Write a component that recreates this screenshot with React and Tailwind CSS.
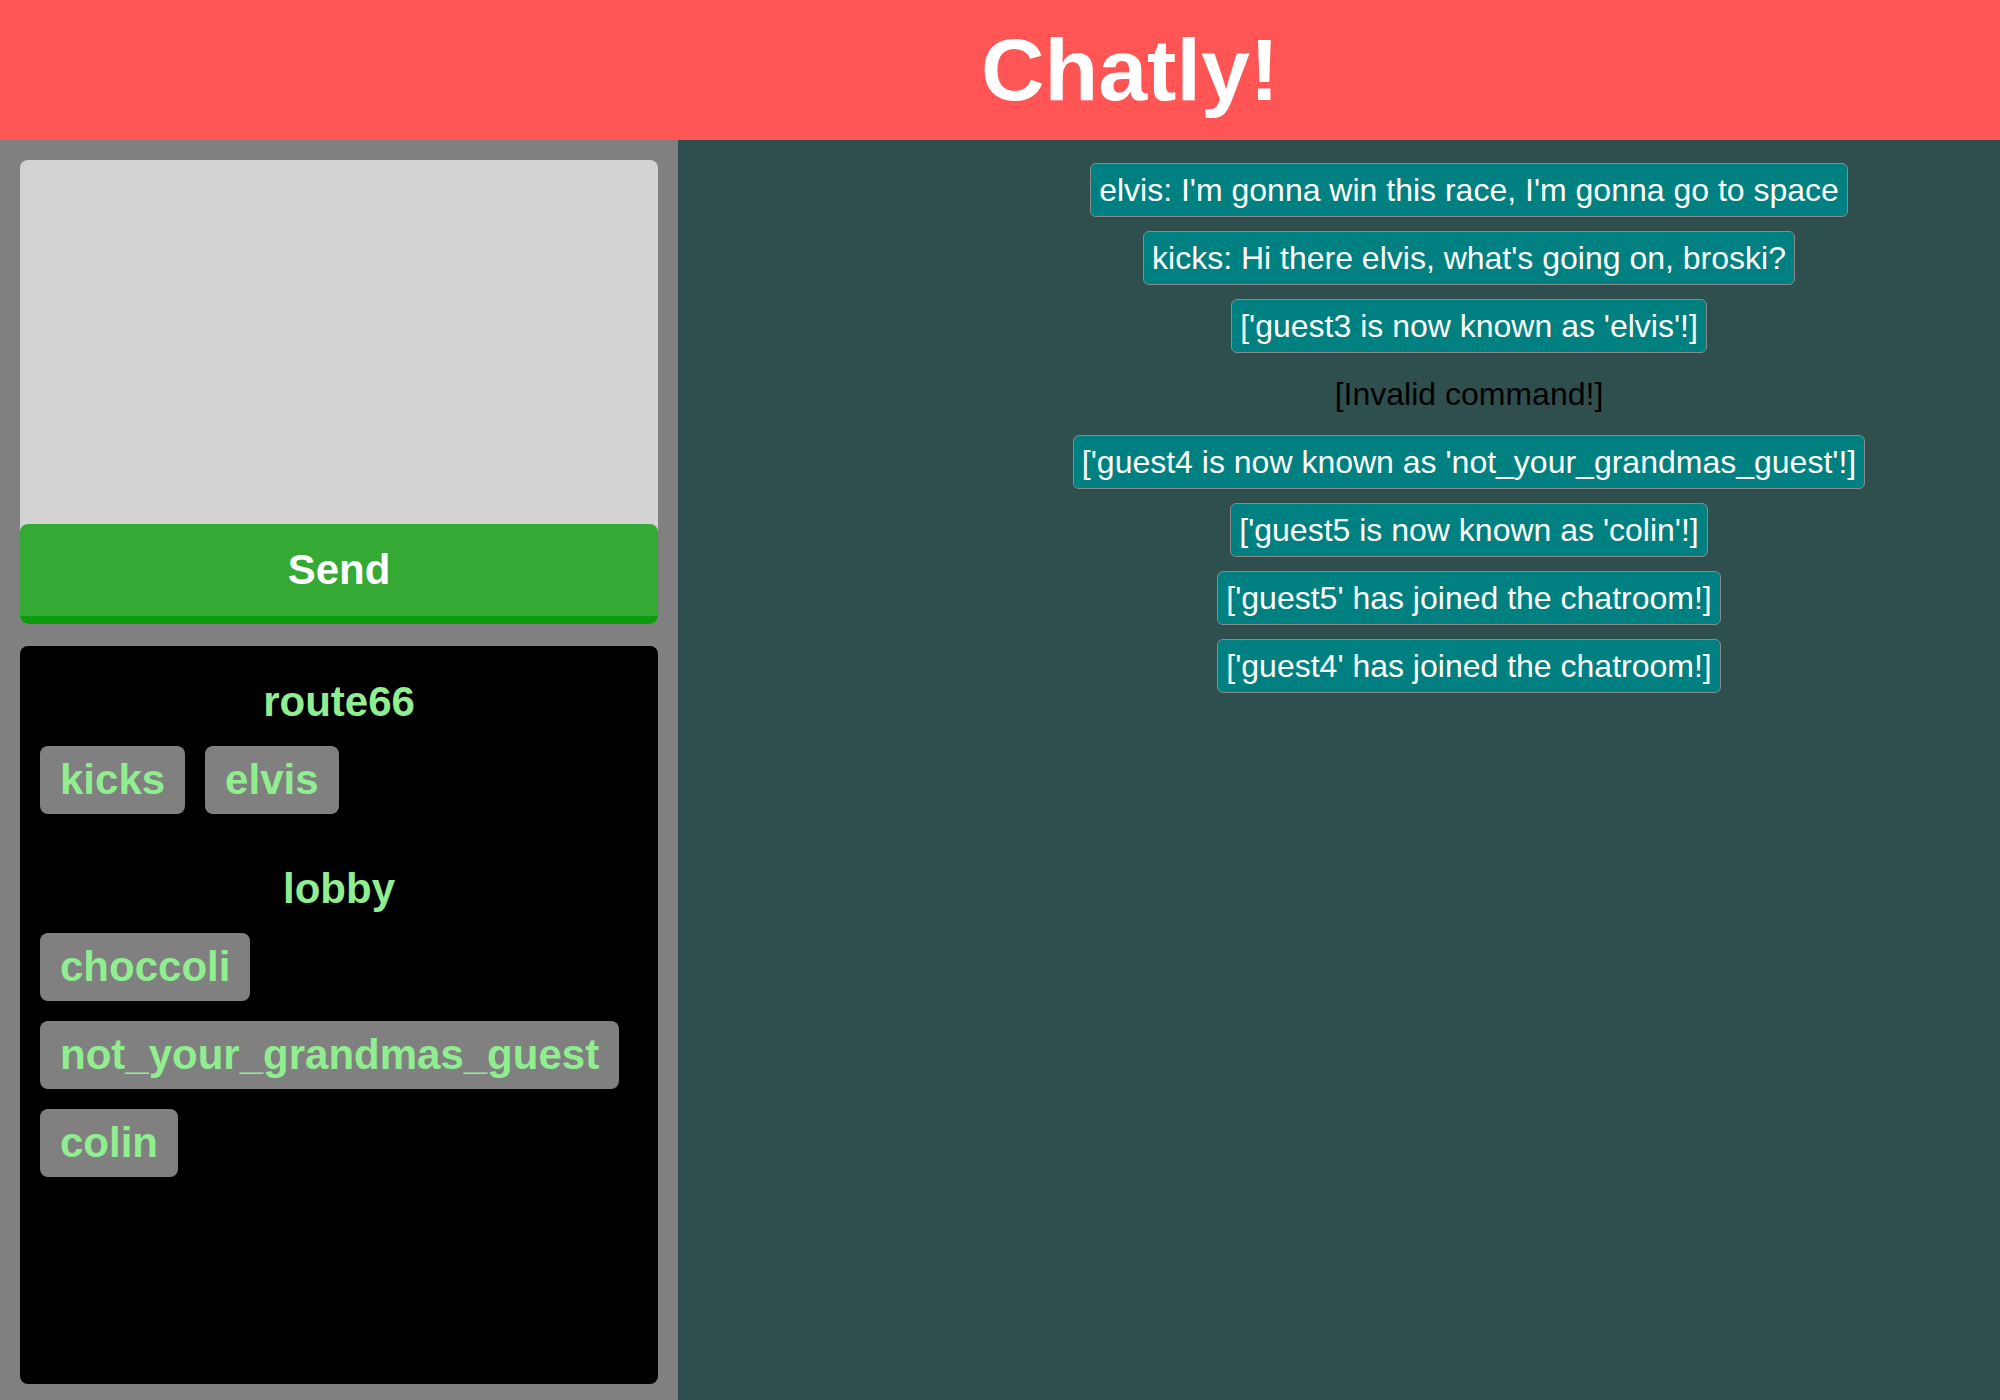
import React from 'react';

const rooms = [
  { name: 'route66', users: ['kicks', 'elvis'] },
  { name: 'lobby', users: ['choccoli', 'not_your_grandmas_guest', 'colin'] },
];

const messages = [
  { text: "elvis: I'm gonna win this race, I'm gonna go to space" },
  { text: "kicks: Hi there elvis, what's going on, broski?" },
  { text: "['guest3 is now known as 'elvis'!]" },
  { text: '[Invalid command!]', system: true },
  { text: "['guest4 is now known as 'not_your_grandmas_guest'!]" },
  { text: "['guest5 is now known as 'colin'!]" },
  { text: "['guest5' has joined the chatroom!]" },
  { text: "['guest4' has joined the chatroom!]" },
];

const App = () => {
  return (
    <div className="h-[1400px] w-full flex flex-col font-['Liberation_Sans',Arial,sans-serif]">
      {/* Header */}
      <div className="h-[140px] shrink-0 bg-[#ff5555] flex items-center justify-center pl-[260px]">
        <h1 className="text-white font-bold text-[88px] leading-none">Chatly!</h1>
      </div>

      <div className="flex flex-1 min-h-0">
        {/* Sidebar */}
        <div className="w-[678px] shrink-0 bg-[#808080] flex flex-col px-5 pt-5 pb-4 gap-[22px]">
          <div className="bg-[#d3d3d3] rounded-lg flex flex-col">
            <textarea className="h-[364px] w-full bg-transparent resize-none outline-none p-3 text-xl" />
            <button className="h-[100px] w-full bg-[#34a934] border-b-8 border-[#0e9a0e] rounded-lg text-white font-bold text-[42px] leading-[46px] flex items-center justify-center">
              Send
            </button>
          </div>

          <div className="flex-1 bg-black rounded-lg px-5 pt-[33px]">
            {rooms.map((room, i) => (
              <div key={room.name} className={i > 0 ? 'mt-[52px]' : ''}>
                <h2 className="text-center text-[#90ee90] font-bold text-[42px] leading-[46px] mb-[21px]">
                  {room.name}
                </h2>
                <div className="flex flex-wrap gap-x-5 gap-y-5">
                  {room.users.map((u) => (
                    <span
                      key={u}
                      className="bg-[#808080] text-[#90ee90] font-bold text-[42px] leading-[46px] py-[11px] px-5 rounded-lg"
                    >
                      {u}
                    </span>
                  ))}
                </div>
              </div>
            ))}
          </div>
        </div>

        {/* Messages */}
        <div className="flex-1 bg-[#2f4f4f] pl-[260px] pt-[23px]">
          <div className="flex flex-col items-center gap-[14px]">
            {messages.map((m, i) =>
              m.system ? (
                <div key={i} className="text-black text-[32px] leading-9 py-2 border border-transparent">
                  {m.text}
                </div>
              ) : (
                <div
                  key={i}
                  className="bg-[#008080] text-white text-[32px] leading-9 py-2 px-2 border border-[#8a8a8a] rounded-md"
                >
                  {m.text}
                </div>
              )
            )}
          </div>
        </div>
      </div>
    </div>
  );
};

export default App;
